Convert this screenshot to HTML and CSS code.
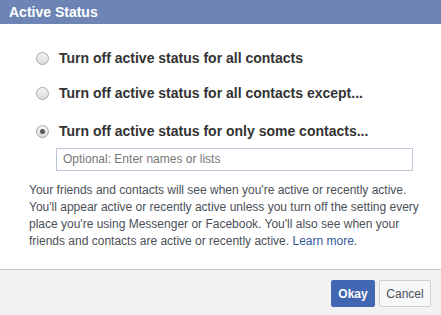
FILE: index.html
```html
<!DOCTYPE html>
<html>
<head>
<meta charset="utf-8">
<link rel="stylesheet" href="styles.css">
</head>
<body>
<div class="dialog">
  <div class="header">Active Status</div>
  <div class="content">
    <ul class="options">
      <li class="option"><span class="radio"></span><span class="label">Turn off active status for all contacts</span></li>
      <li class="option"><span class="radio"></span><span class="label">Turn off active status for all contacts except...</span></li>
      <li class="option option-last"><span class="radio checked"></span><span class="label">Turn off active status for only some contacts...</span></li>
    </ul>
    <div class="input-wrap"><div class="input">Optional: Enter names or lists</div></div>
    <p class="desc">Your friends and contacts will see when you're active or recently active. You'll appear active or recently active unless you turn off the setting every place you're using Messenger or Facebook. You'll also see when your friends and contacts are active or recently active. <a class="link">Learn more</a>.</p>
  </div>
  <div class="footer">
    <button class="btn btn-primary">Okay</button>
    <button class="btn btn-default">Cancel</button>
  </div>
</div>
</body>
</html>
```

FILE: styles.css
```css
html, body {
  margin: 0;
  padding: 0;
  background: #ffffff;
}
.dialog {
  width: 441px;
  height: 315px;
  display: flex;
  flex-direction: column;
  font-family: "Liberation Sans", Arial, sans-serif;
  overflow: hidden;
}
.header {
  height: 24px;
  line-height: 24px;
  background: #6d84b4;
  color: #ffffff;
  font-weight: bold;
  font-size: 14px;
  padding-left: 9px;
}
.content {
  flex: 1;
  padding: 24px 0 0 29px;
}
.options {
  list-style: none;
  margin: 0;
  padding: 0 0 0 7px;
  display: flex;
  flex-direction: column;
  gap: 15px;
}
.option {
  display: flex;
  align-items: center;
  height: 20px;
}
.option-last {
  margin-top: 3px;
}
.radio {
  width: 11px;
  height: 11px;
  border: 1px solid #a8a8a8;
  border-radius: 50%;
  background: linear-gradient(#f3f3f3, #dcdcdc);
  margin-right: 10px;
  position: relative;
  flex: none;
}
.radio.checked::after {
  content: "";
  position: absolute;
  left: 3px;
  top: 3px;
  width: 5px;
  height: 5px;
  border-radius: 50%;
  background: #5a5a5a;
}
.label {
  font-weight: bold;
  font-size: 14px;
  color: #333333;
}
.input-wrap {
  padding-left: 27px;
  margin-top: 7px;
}
.input {
  width: 349px;
  height: 21px;
  line-height: 21px;
  border: 1px solid #bdc7d8;
  padding-left: 6px;
  font-size: 12px;
  color: #777777;
}
.desc {
  margin: 11px 0 0 0;
  width: 400px;
  font-size: 12px;
  line-height: 17px;
  color: #4b4f56;
}
.link {
  color: #365899;
}
.footer {
  height: 46px;
  border-top: 1px solid #c9c9c9;
  background: #f2f2f2;
  display: flex;
  justify-content: flex-end;
  align-items: flex-start;
  gap: 4px;
  padding: 10px 10px 0 0;
  box-sizing: border-box;
}
.btn {
  height: 27px;
  font-family: "Liberation Sans", Arial, sans-serif;
  font-size: 12px;
  border-radius: 2px;
  margin: 0;
  cursor: pointer;
}
.btn-primary {
  width: 44px;
  background: #4267b2;
  border: 1px solid #4267b2;
  color: #ffffff;
  font-weight: bold;
  padding: 0;
}
.btn-default {
  width: 52px;
  background: #f6f7f9;
  border: 1px solid #ced0d4;
  color: #4b4f56;
  padding: 0;
}
```
